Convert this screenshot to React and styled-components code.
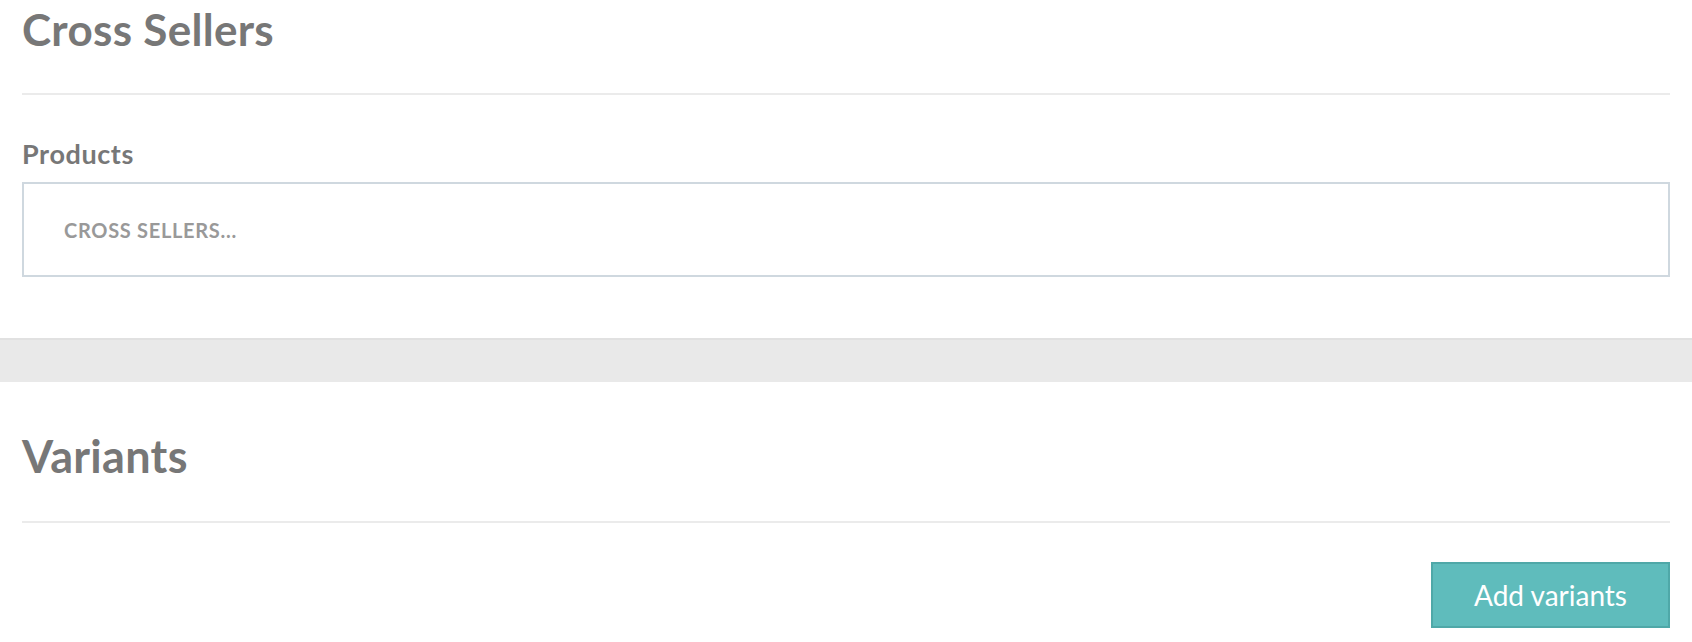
import React from 'react';
import styled, { createGlobalStyle } from 'styled-components';

const GlobalStyle = createGlobalStyle`
  html, body {
    margin: 0;
    padding: 0;
    background: #fff;
    font-family: Lato, "Open Sans", sans-serif;
  }
`;

const Page = styled.div`
  width: 1692px;
  height: 642px;
  overflow: hidden;
`;

const Section = styled.section`
  padding: ${(p) => p.$top}px 22px 0;
  height: ${(p) => p.$height}px;
  box-sizing: border-box;
`;

const Title = styled.h2`
  margin: 0;
  font-size: ${(p) => p.$size}px;
  line-height: 48px;
  letter-spacing: 0.3px;
  font-weight: 700;
  color: #777;
`;

const Divider = styled.hr`
  margin: ${(p) => p.$gap}px 0 0;
  border: none;
  border-top: 2px solid #ebebeb;
`;

const Label = styled.label`
  display: block;
  margin-top: 44px;
  font-size: 27px;
  line-height: 30px;
  letter-spacing: 0.6px;
  font-weight: 700;
  color: #777;
`;

const Field = styled.input`
  display: block;
  box-sizing: border-box;
  width: 100%;
  height: 95px;
  margin-top: 13px;
  padding: 0 40px;
  border: 2px solid #cfd8df;
  outline: none;
  font-family: Lato, sans-serif;
  font-size: 20px;
  letter-spacing: 0.7px;
  font-weight: 700;
  color: #777;
  &::placeholder {
    color: #999;
    opacity: 1;
  }
`;

const Band = styled.div`
  height: 44px;
  background: #e9e9e9;
  border-top: 2px solid #e1e1e1;
  box-sizing: border-box;
`;

const Actions = styled.div`
  display: flex;
  justify-content: flex-end;
  margin-top: 39px;
`;

const Button = styled.button`
  width: 239px;
  height: 66px;
  background: #5fbcbc;
  border: 2px solid #4fa8a8;
  color: #fff;
  font-family: Lato, sans-serif;
  font-size: 28px;
  font-weight: 400;
  cursor: pointer;
`;

export default function App() {
  return (
    <Page>
      <GlobalStyle />
      <Section $top={5} $height={338}>
        <Title $size={44}>Cross Sellers</Title>
        <Divider $gap={40} />
        <Label>Products</Label>
        <Field placeholder="CROSS SELLERS..." />
      </Section>
      <Band />
      <Section $top={50} $height={260}>
        <Title $size={45}>Variants</Title>
        <Divider $gap={41} />
        <Actions>
          <Button>Add variants</Button>
        </Actions>
      </Section>
    </Page>
  );
}
